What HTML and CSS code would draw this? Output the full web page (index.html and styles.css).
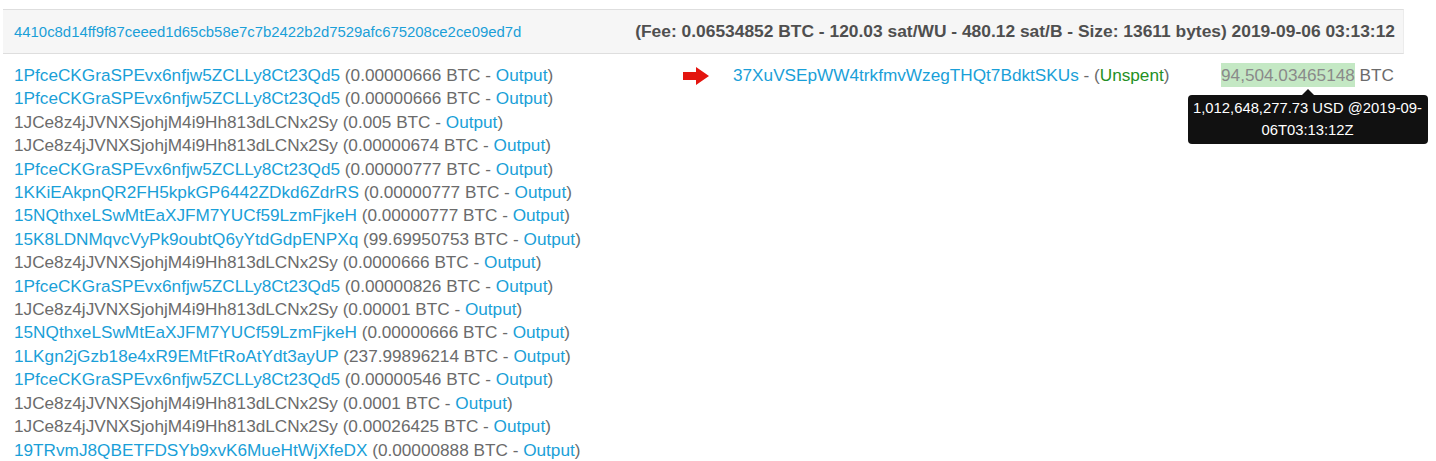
FILE: index.html
```html
<!DOCTYPE html>
<html>
<head>
<title>Transaction</title>
<link rel="stylesheet" href="styles.css">
</head>
<body>
<div class="tx">
	<div class="txHead">
		<a class="hash" href="#">4410c8d14ff9f87ceeed1d65cb58e7c7b2422b2d7529afc675208ce2ce09ed7d</a>
		<span class="info">(Fee: 0.06534852 BTC - 120.03 sat/WU - 480.12 sat/B - Size: 13611 bytes) 2019-09-06 03:13:12</span>
	</div>
	<div class="txBody">
		<div class="inputs">
			<div class="row"><a href="#">1PfceCKGraSPEvx6nfjw5ZCLLy8Ct23Qd5</a> (0.00000666 BTC - <a href="#">Output</a>)</div>
			<div class="row"><a href="#">1PfceCKGraSPEvx6nfjw5ZCLLy8Ct23Qd5</a> (0.00000666 BTC - <a href="#">Output</a>)</div>
			<div class="row">1JCe8z4jJVNXSjohjM4i9Hh813dLCNx2Sy (0.005 BTC - <a href="#">Output</a>)</div>
			<div class="row">1JCe8z4jJVNXSjohjM4i9Hh813dLCNx2Sy (0.00000674 BTC - <a href="#">Output</a>)</div>
			<div class="row"><a href="#">1PfceCKGraSPEvx6nfjw5ZCLLy8Ct23Qd5</a> (0.00000777 BTC - <a href="#">Output</a>)</div>
			<div class="row"><a href="#">1KKiEAkpnQR2FH5kpkGP6442ZDkd6ZdrRS</a> (0.00000777 BTC - <a href="#">Output</a>)</div>
			<div class="row"><a href="#">15NQthxeLSwMtEaXJFM7YUCf59LzmFjkeH</a> (0.00000777 BTC - <a href="#">Output</a>)</div>
			<div class="row"><a href="#">15K8LDNMqvcVyPk9oubtQ6yYtdGdpENPXq</a> (99.69950753 BTC - <a href="#">Output</a>)</div>
			<div class="row">1JCe8z4jJVNXSjohjM4i9Hh813dLCNx2Sy (0.0000666 BTC - <a href="#">Output</a>)</div>
			<div class="row"><a href="#">1PfceCKGraSPEvx6nfjw5ZCLLy8Ct23Qd5</a> (0.00000826 BTC - <a href="#">Output</a>)</div>
			<div class="row">1JCe8z4jJVNXSjohjM4i9Hh813dLCNx2Sy (0.00001 BTC - <a href="#">Output</a>)</div>
			<div class="row"><a href="#">15NQthxeLSwMtEaXJFM7YUCf59LzmFjkeH</a> (0.00000666 BTC - <a href="#">Output</a>)</div>
			<div class="row"><a href="#">1LKgn2jGzb18e4xR9EMtFtRoAtYdt3ayUP</a> (237.99896214 BTC - <a href="#">Output</a>)</div>
			<div class="row"><a href="#">1PfceCKGraSPEvx6nfjw5ZCLLy8Ct23Qd5</a> (0.00000546 BTC - <a href="#">Output</a>)</div>
			<div class="row">1JCe8z4jJVNXSjohjM4i9Hh813dLCNx2Sy (0.0001 BTC - <a href="#">Output</a>)</div>
			<div class="row">1JCe8z4jJVNXSjohjM4i9Hh813dLCNx2Sy (0.00026425 BTC - <a href="#">Output</a>)</div>
			<div class="row"><a href="#">19TRvmJ8QBETFDSYb9xvK6MueHtWjXfeDX</a> (0.00000888 BTC - <a href="#">Output</a>)</div>
		</div>
		<div class="arrow">
			<svg width="26" height="18" viewBox="0 0 26 18"><path d="M0 5H13V0L26 9L13 18V13H0Z" fill="#e3150f"/></svg>
		</div>
		<div class="outputs">
			<div class="row outRow">
				<span><a href="#">37XuVSEpWW4trkfmvWzegTHQt7BdktSKUs</a> - (<span class="unspent">Unspent</span>)</span>
				<span class="value"><span class="amount">94,504.03465148</span> BTC
					<span class="tip">1,012,648,277.73 USD @2019-09-06T03:13:12Z</span>
				</span>
			</div>
		</div>
	</div>
</div>
</body>
</html>
```

FILE: styles.css
```css
html,body{
	margin:0;
	padding:0;
	background:#fff;
	font-family:"Liberation Sans",Arial,sans-serif;
	color:#6b6b6b;
}
a{
	color:#1a9fd8;
	text-decoration:none;
}
.tx{
	width:1401px;
	margin:9px 0 0 3px;
}
.txHead{
	display:flex;
	justify-content:space-between;
	align-items:center;
	height:43px;
	background-color:#f6f6f6;
	border-top:1px solid #dedede;
	border-bottom:1px solid #dedede;
	border-right:1px solid #ececec;
	padding:0 8px 0 11px;
}
.txHead .hash{
	font-size:14.9px;
}
.txHead .info{
	font-size:17.4px;
	font-weight:bold;
	color:#4f4f4f;
}
.txBody{
	display:flex;
	padding-top:10px;
}
.row{
	font-size:17.2px;
	line-height:23.4px;
	white-space:nowrap;
}
.inputs{
	width:669px;
	padding-left:11px;
}
.arrow{
	width:50px;
	padding-top:3px;
}
.outputs{
	flex:1;
	padding-right:10px;
}
.outRow{
	display:flex;
	justify-content:space-between;
}
.unspent{
	color:#239023;
}
.value{
	position:relative;
}
.amount{
	background-color:#c4e8c4;
	color:#8a8a8a;
	padding:2px 0;
}
.tip{
	position:absolute;
	top:31px;
	left:50%;
	transform:translateX(-50%);
	width:232px;
	padding:3px 4px;
	background:#111;
	color:#fff;
	border-radius:4px;
	font-size:14.8px;
	line-height:21.5px;
	text-align:center;
	white-space:normal;
}
.tip:before{
	content:"";
	position:absolute;
	top:-6px;
	left:50%;
	margin-left:-6px;
	border-left:6px solid transparent;
	border-right:6px solid transparent;
	border-bottom:6px solid #111;
}
```
